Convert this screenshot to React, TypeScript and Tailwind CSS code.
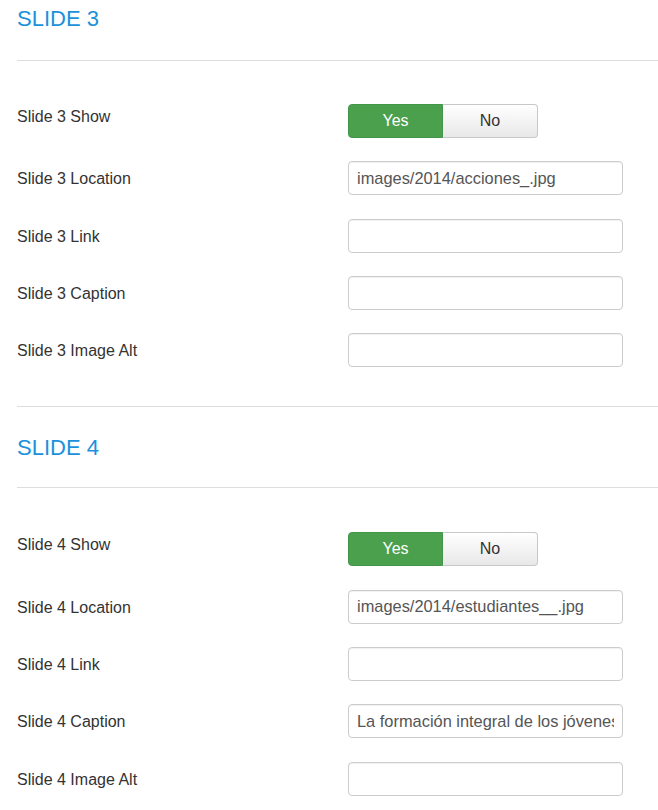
import React from 'react';

type Field = { label: string; value?: string; toggle?: boolean };

const fields = (n: number, location: string, caption = ''): Field[] => [
  { label: `Slide ${n} Show`, toggle: true },
  { label: `Slide ${n} Location`, value: location },
  { label: `Slide ${n} Link`, value: '' },
  { label: `Slide ${n} Caption`, value: caption },
  { label: `Slide ${n} Image Alt`, value: '' },
];

const Toggle: React.FC = () => (
  <div className="flex h-[34px] w-[190px]">
    <button className="w-[95px] h-full rounded-l-[4px] bg-[#4aa04d] border border-[#43954a] text-white text-[16px] leading-none">
      Yes
    </button>
    <button className="w-[95px] h-full rounded-r-[4px] border border-l-0 border-[#c8c8c8] bg-gradient-to-b from-white to-[#e8e8e8] text-[#333] text-[16px] leading-none">
      No
    </button>
  </div>
);

const Section: React.FC<{ n: number; items: Field[]; headTop: string; headGap: string; rowsTop: string }> = ({
  n,
  items,
  headTop,
  headGap,
  rowsTop,
}) => (
  <section>
    <h2 className={`${headTop} text-[22px] leading-[24px] text-[#1b91dc]`}>SLIDE {n}</h2>
    <div className={`${headGap} border-t border-[#dedede]`} />
    <div className={`${rowsTop} flex flex-col gap-[23.33px]`}>
      {items.map((f) => (
        <div key={f.label} className="flex h-[34px]">
          <label className={`w-[331px] shrink-0 text-[16px] leading-[20px] text-[#333] ${f.toggle ? 'pt-[3px]' : 'pt-[8px]'}`}>
            {f.label}
          </label>
          {f.toggle ? (
            <Toggle />
          ) : (
            <input
              readOnly
              defaultValue={f.value}
              className="w-[275px] h-[34px] rounded-[4px] border border-[#cccccc] bg-white px-[8px] text-[16.4px] text-[#555] shadow-[inset_0_1px_1px_rgba(0,0,0,0.06)] outline-none"
              style={{ fontFamily: 'inherit' }}
            />
          )}
        </div>
      ))}
    </div>
  </section>
);

export default function App() {
  return (
    <div className="min-h-[810px] bg-white pl-[17px] font-['Liberation_Sans',Arial,sans-serif]">
      <Section n={3} items={fields(3, 'images/2014/acciones_.jpg')} headTop="pt-[7px]" headGap="mt-[29px]" rowsTop="mt-[43px]" />
      <div className="mt-[39px] border-t border-[#dedede]" />
      <Section
        n={4}
        items={fields(4, 'images/2014/estudiantes__.jpg', 'La formación integral de los jóvenes')}
        headTop="pt-[29px]"
        headGap="mt-[27px]"
        rowsTop="mt-[44px]"
      />
    </div>
  );
}
